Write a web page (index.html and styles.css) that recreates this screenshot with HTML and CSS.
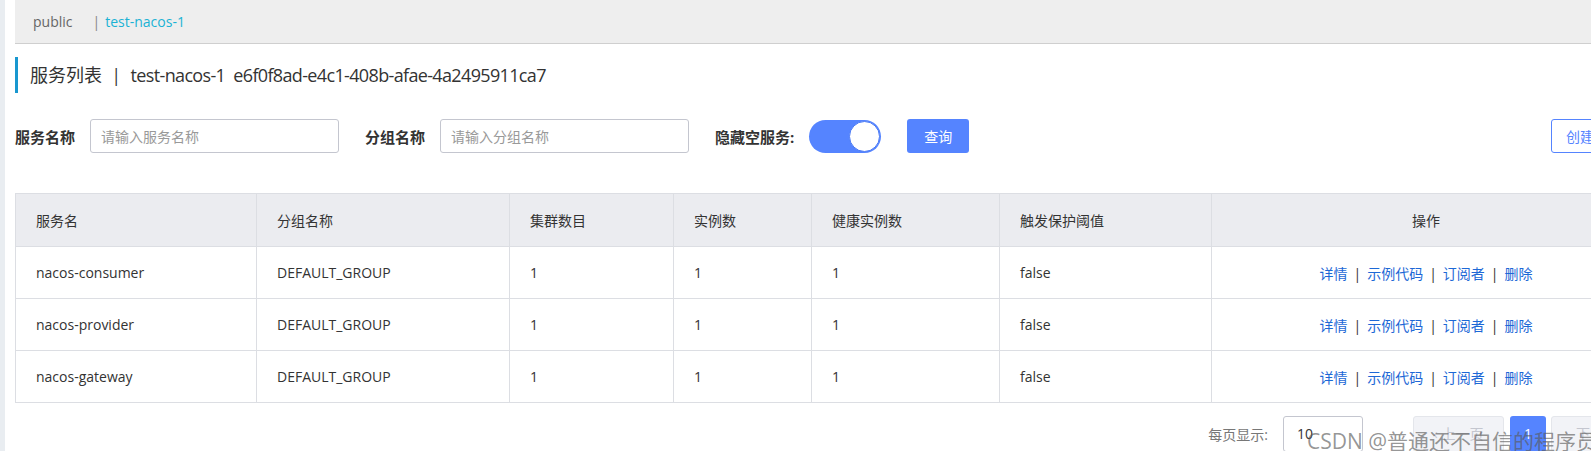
FILE: index.html
```html
<!DOCTYPE html>
<html lang="zh-CN">
<head>
<meta charset="utf-8">
<title>服务列表</title>
<link rel="stylesheet" href="styles.css">
</head>
<body>
<div class="page">
  <aside class="side-edge"></aside>
  <main class="main">
    <div class="topbar">
      <span class="ns">public</span>
      <span class="ns-sep">|</span>
      <span class="ns ns-active">test-nacos-1</span>
    </div>

    <h1 class="title">服务列表&nbsp;&nbsp;|&nbsp;&nbsp;<span class="title-id">test-nacos-1&nbsp;&nbsp;e6f0f8ad-e4c1-408b-afae-4a2495911ca7</span></h1>

    <form class="filters">
      <label class="f-label f-label-1">服务名称</label>
      <input class="f-input" type="text" placeholder="请输入服务名称">
      <label class="f-label f-label-2">分组名称</label>
      <input class="f-input" type="text" placeholder="请输入分组名称">
      <label class="f-label f-label-3">隐藏空服务:</label>
      <span class="toggle"><span class="knob"></span></span>
      <button type="button" class="btn-primary">查询</button>
      <span class="spacer"></span>
      <button type="button" class="btn-outline">创建服务</button>
    </form>

    <table class="svc-table">
      <colgroup>
        <col style="width:241px"><col style="width:253px"><col style="width:164px"><col style="width:138px"><col style="width:188px"><col style="width:212px"><col style="width:429px">
      </colgroup>
      <thead>
        <tr>
          <th>服务名</th><th>分组名称</th><th>集群数目</th><th>实例数</th><th>健康实例数</th><th>触发保护阈值</th><th class="ops">操作</th>
        </tr>
      </thead>
      <tbody>
        <tr>
          <td>nacos-consumer</td><td>DEFAULT_GROUP</td><td>1</td><td>1</td><td>1</td><td>false</td>
          <td class="ops"><a>详情</a><span class="bar">|</span><a>示例代码</a><span class="bar">|</span><a>订阅者</a><span class="bar">|</span><a>删除</a></td>
        </tr>
        <tr>
          <td>nacos-provider</td><td>DEFAULT_GROUP</td><td>1</td><td>1</td><td>1</td><td>false</td>
          <td class="ops"><a>详情</a><span class="bar">|</span><a>示例代码</a><span class="bar">|</span><a>订阅者</a><span class="bar">|</span><a>删除</a></td>
        </tr>
        <tr>
          <td>nacos-gateway</td><td>DEFAULT_GROUP</td><td>1</td><td>1</td><td>1</td><td>false</td>
          <td class="ops"><a>详情</a><span class="bar">|</span><a>示例代码</a><span class="bar">|</span><a>订阅者</a><span class="bar">|</span><a>删除</a></td>
        </tr>
      </tbody>
    </table>

    <div class="pager">
      <span class="pg-label">每页显示:</span>
      <span class="pg-select">10</span>
      <span class="pg-btn pg-prev">‹ 上一页</span>
      <span class="pg-cur">1</span>
      <span class="pg-btn pg-next">下一页 ›</span>
    </div>
  </main>
</div>
<div class="watermark">CSDN @普通还不自信的程序员</div>
</body>
</html>
```

FILE: styles.css
```css
html, body {
  margin: 0;
  padding: 0;
  background: #fff;
  height: 451px;
  overflow: hidden;
}
body {
  font-family: "Open Sans", "Noto Sans CJK SC", sans-serif;
  font-size: 14px;
  color: #333;
  position: relative;
}
.page {
  display: flex;
  height: 451px;
}
.side-edge {
  width: 5px;
  flex: none;
  background: #e9edf1;
}
.main {
  flex: 1;
  min-width: 0;
  padding-left: 10px;
  overflow: hidden;
}
.topbar {
  height: 43px;
  background: #eeeeee;
  border-bottom: 1px solid #cfcfcf;
  display: flex;
  align-items: center;
  padding-left: 18px;
  font-size: 14px;
}
.ns { color: #666; }
.ns-sep { color: #888; margin: 0 5px 0 20px; }
.ns-active { color: #1ab2d4; }

.title {
  margin: 13px 0 0 0;
  height: 36px;
  line-height: 36px;
  border-left: 3px solid #1897cf;
  padding-left: 12px;
  font-size: 18px;
  font-weight: normal;
  color: #333;
  white-space: nowrap;
}
.title-id { letter-spacing: -0.65px; }

.filters {
  display: flex;
  align-items: center;
  margin-top: 26px;
  height: 34px;
}
.f-label {
  font-weight: bold;
  color: #333;
  font-size: 15px;
  white-space: nowrap;
}
.f-label-1 { margin-right: 15px; }
.f-label-2 { margin-left: 26px; margin-right: 15px; }
.f-label-3 { margin-left: 26px; margin-right: 15px; }
.f-input {
  box-sizing: border-box;
  width: 249px;
  height: 34px;
  border: 1px solid #c4c6cf;
  border-radius: 3px;
  padding: 0 10px;
  font-family: inherit;
  font-size: 14px;
  color: #333;
  outline: none;
}
.f-input::placeholder { color: #999; }
.toggle {
  box-sizing: border-box;
  width: 72px;
  height: 33px;
  border-radius: 17px;
  background: #5584ff;
  display: flex;
  justify-content: flex-end;
  align-items: center;
  padding-right: 1px;
}
.knob {
  box-sizing: border-box;
  width: 31px;
  height: 31px;
  border-radius: 50%;
  background: #fff;
  border: 1px solid #4d7cf5;
}
.btn-primary {
  margin-left: 26px;
  width: 62px;
  height: 34px;
  border: none;
  border-radius: 3px;
  background: #5584ff;
  color: #fff;
  font-family: inherit;
  font-size: 14px;
  padding: 0;
}
.spacer { flex: 1; }
.btn-outline {
  flex: none;
  width: 90px;
  margin-right: -50px;
  height: 34px;
  background: #fff;
  border: 1px solid #5584ff;
  border-radius: 3px;
  color: #5584ff;
  font-family: inherit;
  font-size: 14px;
  padding: 0 0 0 14px;
  text-align: left;
  white-space: nowrap;
}

.svc-table {
  margin-top: 40px;
  width: 1625px;
  table-layout: fixed;
  border-collapse: collapse;
}
.svc-table th,
.svc-table td {
  border: 1px solid #dcdee3;
  text-align: left;
  padding: 0 20px;
  font-size: 14px;
  color: #333;
  white-space: nowrap;
}
.svc-table th {
  background: #ebecf0;
  font-weight: normal;
  height: 52px;
}
.svc-table td {
  height: 51px;
}
.svc-table .ops { text-align: center; padding: 0; }
.ops a { color: #1d68d6; }
.ops .bar { color: #333; margin: 0 6px; }

.pager {
  display: flex;
  justify-content: flex-end;
  align-items: center;
  margin-top: 13px;
  margin-right: -60px;
}
.pg-label {
  color: #777;
  margin-right: 15px;
}
.pg-select {
  box-sizing: border-box;
  width: 80px;
  height: 36px;
  border: 1px solid #c4c6cf;
  border-radius: 3px;
  padding-left: 13px;
  line-height: 34px;
  color: #333;
  margin-right: 50px;
}
.pg-btn {
  box-sizing: border-box;
  height: 36px;
  line-height: 34px;
  background: #f2f3f7;
  border: 1px solid #e4e6eb;
  border-radius: 3px;
  color: #c4c6cf;
  font-size: 14px;
  text-align: center;
}
.pg-prev { width: 91px; }
.pg-next { width: 100px; }
.pg-cur {
  box-sizing: border-box;
  width: 36px;
  height: 36px;
  line-height: 36px;
  background: #5584ff;
  border-radius: 3px;
  color: #fff;
  text-align: center;
  margin: 0 5px 0 6px;
}

.watermark {
  position: absolute;
  left: 1307px;
  top: 427px;
  font-size: 21px;
  line-height: 28px;
  color: rgba(90, 90, 90, 0.65);
  white-space: nowrap;
  pointer-events: none;
}
```
